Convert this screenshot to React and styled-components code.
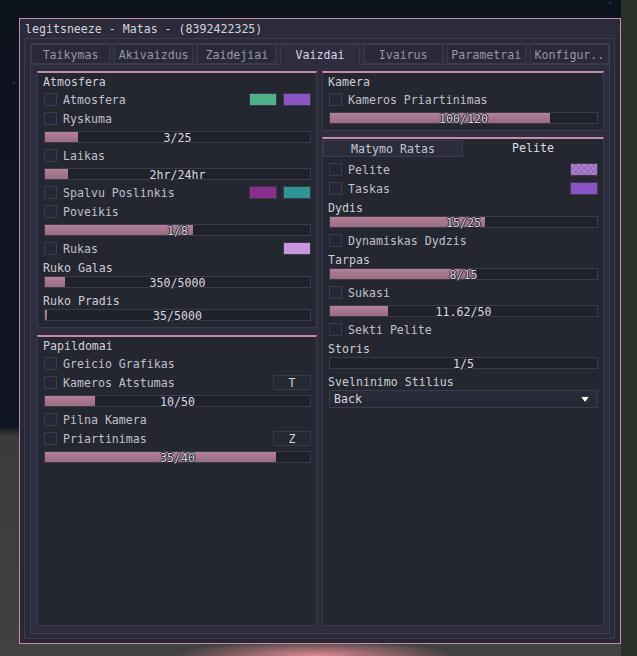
import React from "react";
import styled, { createGlobalStyle } from "styled-components";

const GlobalStyle = createGlobalStyle`
  html, body {
    margin: 0;
    padding: 0;
    background: #0c141e;
  }
  body {
    font-family: "DejaVu Sans Mono", "Liberation Mono", monospace;
    font-size: 11.6px;
    color: #c8c8d4;
  }
`;

const PINK = "#c98aa8";
const LINE = "#3a3a50";

const Scene = styled.div`
  width: 637px;
  height: 656px;
  box-sizing: border-box;
  padding: 18px 0 0 19px;
  overflow: hidden;
  background:
    radial-gradient(ellipse 140px 16px at 315px 656px, rgba(232, 140, 150, 0.95), rgba(232, 140, 150, 0) 100%),
    radial-gradient(circle 1px at 610px 3px, #8090a0, transparent),
    radial-gradient(circle 1px at 14px 83px, #8090a0, transparent),
    linear-gradient(90deg, transparent 97.5%, #2b3029 97.5%),
    linear-gradient(180deg, #0c141e 0, #0d1622 65%, #3b3b3b 66.5%, #414141 100%);
`;

const Window = styled.div`
  width: 602px;
  height: 626px;
  box-sizing: border-box;
  border: 1px solid ${PINK};
  background: #282835;
  display: flex;
  flex-direction: column;
`;

const TitleBar = styled.div`
  height: 19px;
  line-height: 21px;
  padding-left: 5px;
  color: #d4d4dc;
  background: #2b2b3a;
  white-space: nowrap;
`;

const WindowBody = styled.div`
  flex: 1;
  display: flex;
  padding: 0 5px 4px 4px;
  min-height: 0;
`;

const OuterFrame = styled.div`
  flex: 1;
  display: flex;
  border: 1px solid ${LINE};
  background: #2a2a3a;
  padding: 4px 4px 4px 5px;
`;

const InnerFrame = styled.div`
  flex: 1;
  display: flex;
  flex-direction: column;
  border: 1px solid ${LINE};
  background: #2d2d3f;
`;

const TabBar = styled.div`
  display: flex;
  gap: 4px;
  height: 20px;
  border-bottom: 1px solid ${LINE};
`;

const Tab = styled.div`
  flex: 1;
  box-sizing: border-box;
  height: ${(p) => (p.$active ? "21px" : "20px")};
  border: 1px solid ${LINE};
  border-bottom: ${(p) => (p.$active ? "none" : `1px solid ${LINE}`)};
  background: ${(p) => (p.$active ? "#2d2d3f" : "#29293a")};
  color: ${(p) => (p.$active ? "#d8d8e0" : "#9696a6")};
  text-align: center;
  line-height: 20px;
  white-space: nowrap;
  overflow: hidden;
`;

const Content = styled.div`
  flex: 1;
  display: grid;
  grid-template-columns: 280px 1fr;
  gap: 5px;
  padding: 6px 5px 7px 6px;
  min-height: 0;
`;

const Column = styled.div`
  display: flex;
  flex-direction: column;
  gap: ${(p) => p.$gap}px;
`;

const Child = styled.div`
  box-sizing: border-box;
  height: ${(p) => (p.$height ? `${p.$height}px` : "auto")};
  flex: ${(p) => (p.$height ? "none" : "1")};
  border: 1px solid ${LINE};
  border-top: 2px solid ${PINK};
  background: #242630;
  display: flex;
  flex-direction: column;
`;

const Body = styled.div`
  display: flex;
  flex-direction: column;
  gap: 6px;
  padding: ${(p) => p.$top ?? 2}px 5px 0 6px;
`;

const Header = styled.div`
  height: 12px;
  line-height: 14px;
  margin-left: -1px;
  color: #d0d0d8;
`;

const Label = styled.div`
  height: 12px;
  line-height: 14px;
  margin-left: -1px;
  margin-bottom: -3px;
  color: #cdcdd6;
`;

const Row = styled.div`
  display: flex;
  align-items: center;
  gap: 6px;
  height: 13px;
`;

const Box = styled.span`
  width: 13px;
  height: 13px;
  box-sizing: border-box;
  border: 1px solid #3b3b50;
  background: #252734;
  flex: none;
`;

const RowText = styled.span`
  align-self: flex-start;
  color: #c0c0cc;
  line-height: 15px;
  white-space: nowrap;
`;

const Extras = styled.div`
  margin-left: auto;
  display: flex;
  gap: 6px;
`;

const Swatch = styled.span`
  width: 28px;
  height: 13px;
  box-sizing: border-box;
  border: 1px solid #383a4c;
  background: ${(p) =>
    p.$checker
      ? `repeating-conic-gradient(${p.$color} 0 25%, #a97fc8 0 50%) 0 0 / 6px 6px`
      : p.$color};
`;

const KeyButton = styled.span`
  width: 38px;
  height: 15px;
  margin: -1px 0;
  box-sizing: border-box;
  border: 1px solid #3a3a4c;
  background: #262834;
  color: #d0d0d8;
  text-align: center;
  line-height: 15px;
`;

const SliderTrack = styled.div`
  position: relative;
  height: 12px;
  box-sizing: border-box;
  border: 1px solid #393a4c;
  background: #1f212b;
`;

const SliderFill = styled.div`
  position: absolute;
  left: 0;
  top: 0;
  bottom: 0;
  background: linear-gradient(180deg, #b4819a 0%, #a5758b 50%, #9a6b81 100%);
`;

const SliderValue = styled.div`
  position: relative;
  text-align: center;
  line-height: 12px;
  height: 10px;
  color: #d8d8e0;
  text-shadow: 1px 0 #23232d, -1px 0 #23232d, 0 1px #23232d, 0 -1px #23232d;
`;

const SubTabs = styled.div`
  display: flex;
  padding-top: 1px;
  height: 17px;
`;

const SubTab = styled.div`
  box-sizing: border-box;
  height: 17px;
  flex: ${(p) => (p.$active ? "1" : "none")};
  width: ${(p) => (p.$active ? "auto" : "140px")};
  border: ${(p) => (p.$active ? "none" : `1px solid ${LINE}`)};
  background: ${(p) => (p.$active ? "transparent" : "#2b2d3b")};
  color: ${(p) => (p.$active ? "#dedee6" : "#c6c6d0")};
  text-align: center;
  line-height: 16px;
`;

const Combo = styled.div`
  height: 18px;
  box-sizing: border-box;
  border: 1px solid #3a3a4c;
  background: linear-gradient(180deg, #2a2c39, #262834);
  display: flex;
  align-items: center;
  justify-content: space-between;
  padding: 0 7px 0 4px;
  color: #d8d8e0;
`;

const ComboText = styled.span`
  line-height: 18px;
`;

const Check = ({ label, children }) => (
  <Row>
    <Box />
    <RowText>{label}</RowText>
    {children && <Extras>{children}</Extras>}
  </Row>
);

const Slider = ({ value, pct }) => (
  <SliderTrack>
    {pct > 0 && <SliderFill style={{ width: `${pct}%` }} />}
    <SliderValue>{value}</SliderValue>
  </SliderTrack>
);

const tabs = ["Taikymas", "Akivaizdus", "Zaidejiai", "Vaizdai", "Ivairus", "Parametrai", "Konfigur.."];

export default function App() {
  return (
    <>
      <GlobalStyle />
      <Scene>
        <Window>
          <TitleBar>legitsneeze - Matas - (8392422325)</TitleBar>
          <WindowBody>
            <OuterFrame>
              <InnerFrame>
                <TabBar>
                  {tabs.map((t) => (
                    <Tab key={t} $active={t === "Vaizdai"}>
                      {t}
                    </Tab>
                  ))}
                </TabBar>
                <Content>
                  <Column $gap={7}>
                    <Child $height={257}>
                      <Body>
                        <Header>Atmosfera</Header>
                        <Check label="Atmosfera">
                          <Swatch $color="#50b187" />
                          <Swatch $color="#8a55c2" />
                        </Check>
                        <Check label="Ryskuma" />
                        <Slider value="3/25" pct={12.4} />
                        <Check label="Laikas" />
                        <Slider value="2hr/24hr" pct={8.6} />
                        <Check label="Spalvu Poslinkis">
                          <Swatch $color="#8b2f8e" />
                          <Swatch $color="#2f9494" />
                        </Check>
                        <Check label="Poveikis" />
                        <Slider value="1/8" pct={56} />
                        <Check label="Rukas">
                          <Swatch $color="#c796dc" />
                        </Check>
                        <Label>Ruko Galas</Label>
                        <Slider value="350/5000" pct={7.5} />
                        <Label>Ruko Pradis</Label>
                        <Slider value="35/5000" pct={0.9} />
                      </Body>
                    </Child>
                    <Child>
                      <Body>
                        <Header>Papildomai</Header>
                        <Check label="Greicio Grafikas" />
                        <Check label="Kameros Atstumas">
                          <KeyButton>T</KeyButton>
                        </Check>
                        <Slider value="10/50" pct={18.7} />
                        <Check label="Pilna Kamera" />
                        <Check label="Priartinimas">
                          <KeyButton>Z</KeyButton>
                        </Check>
                        <Slider value="35/40" pct={87} />
                      </Body>
                    </Child>
                  </Column>
                  <Column $gap={6}>
                    <Child $height={60}>
                      <Body>
                        <Header>Kamera</Header>
                        <Check label="Kameros Priartinimas" />
                        <Slider value="100/120" pct={82.4} />
                      </Body>
                    </Child>
                    <Child>
                      <SubTabs>
                        <SubTab>Matymo Ratas</SubTab>
                        <SubTab $active>Pelite</SubTab>
                      </SubTabs>
                      <Body $top={6}>
                        <Check label="Pelite">
                          <Swatch $color="#9a6cbf" $checker />
                        </Check>
                        <Check label="Taskas">
                          <Swatch $color="#8a52c2" />
                        </Check>
                        <Label>Dydis</Label>
                        <Slider value="15/25" pct={58} />
                        <Check label="Dynamiskas Dydzis" />
                        <Label>Tarpas</Label>
                        <Slider value="8/15" pct={54.7} />
                        <Check label="Sukasi" />
                        <Slider value="11.62/50" pct={21.6} />
                        <Check label="Sekti Pelite" />
                        <Label>Storis</Label>
                        <Slider value="1/5" pct={0} />
                        <Label>Svelninimo Stilius</Label>
                        <Combo>
                          <ComboText>Back</ComboText>
                          <svg width="10" height="7" viewBox="0 0 10 7">
                            <polygon points="0.5,0.5 9.5,0.5 5,6.5" fill="#ffffff" stroke="#1a1a22" strokeWidth="0.8" />
                          </svg>
                        </Combo>
                      </Body>
                    </Child>
                  </Column>
                </Content>
              </InnerFrame>
            </OuterFrame>
          </WindowBody>
        </Window>
      </Scene>
    </>
  );
}
